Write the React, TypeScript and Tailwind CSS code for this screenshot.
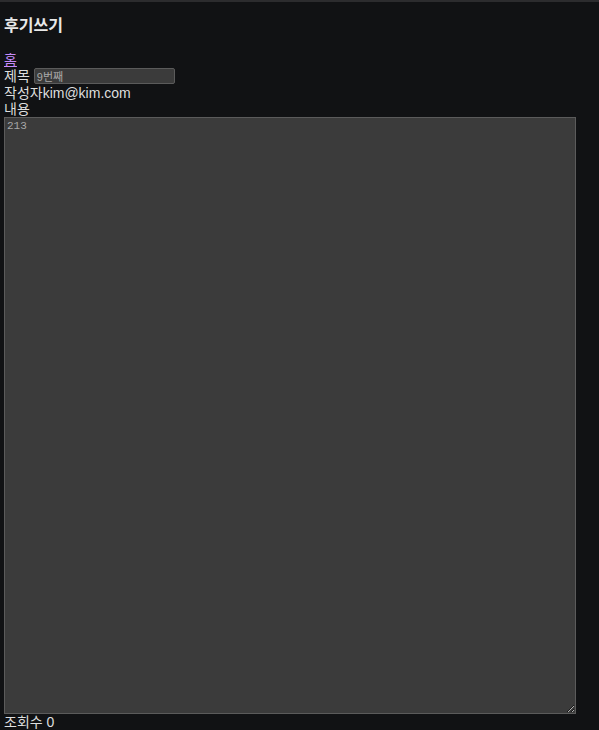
export default function App() {
  return (
    <div className="min-h-[730px] border-t-2 border-[#2c2c2e] bg-[#111214] px-1 text-[14px] leading-[16px] text-[#dedede] [font-family:'Liberation_Sans','Noto_Sans_CJK_KR',sans-serif]">
      <h3 className="pt-[15px] pb-[17px] text-[16px] font-bold leading-[18px] text-[#e8e8e8]">후기쓰기</h3>
      <div>
        <a href="#" className="text-[#c58af9] underline">홈</a>
      </div>
      <div className="flex items-center h-[16px]">
        <span>제목</span>
        <input
          defaultValue="9번째"
          className="ml-[4px] h-[16px] w-[141px] rounded-[2px] border border-[#5b5b5b] bg-[#3b3b3b] px-[2px] text-[11px] leading-[14px] text-[#a8a8a8] outline-none"
        />
      </div>
      <div className="mt-[1px]">작성자kim@kim.com</div>
      <div>내용</div>
      <textarea
        defaultValue="213"
        className="block h-[597px] w-[572px] border border-[#5b5b5b] bg-[#3b3b3b] px-[2px] pt-[1px] text-[11px] leading-[14px] text-[#a8a8a8] outline-none [font-family:'Liberation_Mono',monospace]"
      />
      <div>조회수 0</div>
    </div>
  );
}
